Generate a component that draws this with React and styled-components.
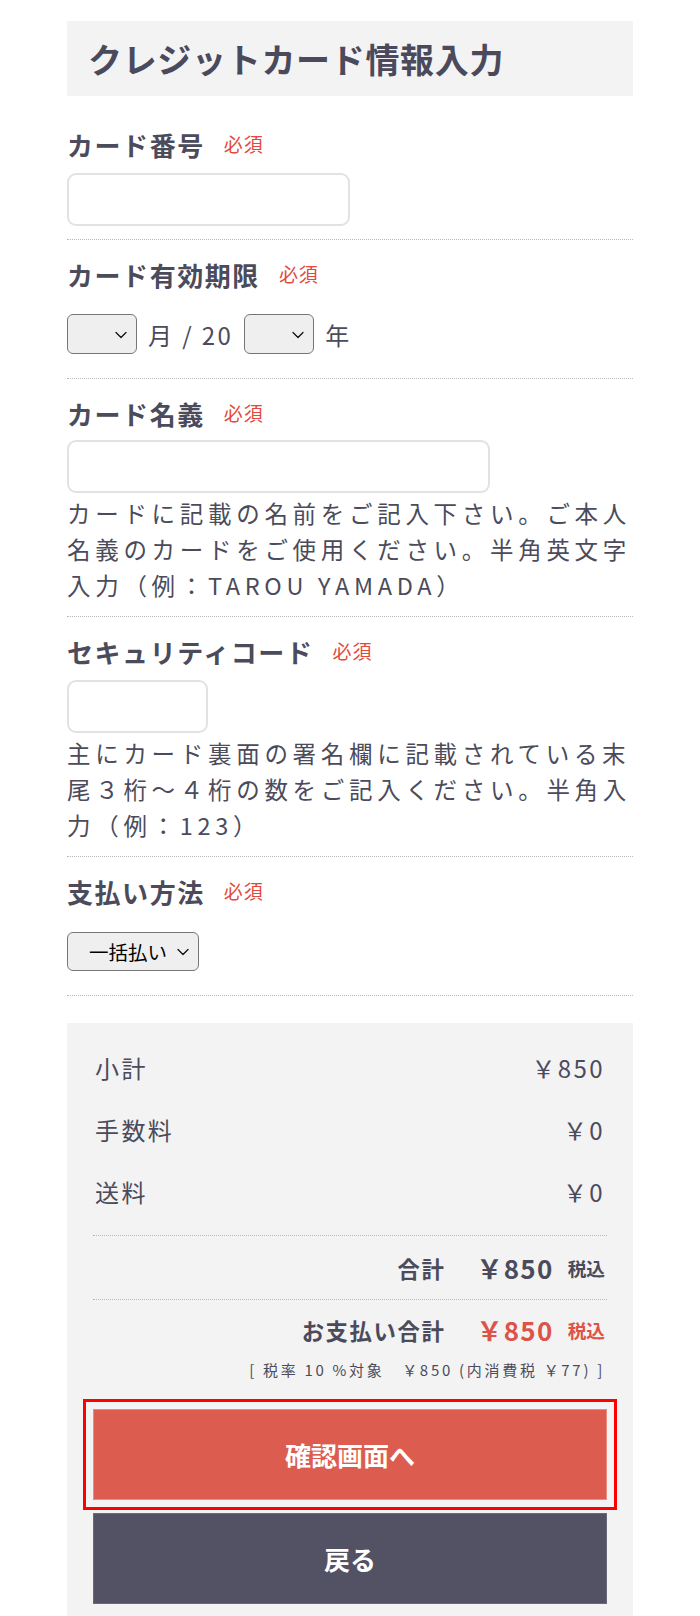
import React from "react";
import styled, { createGlobalStyle } from "styled-components";
import { ChevronDown } from "lucide-react";

const GlobalStyle = createGlobalStyle`
  html, body {
    margin: 0;
    padding: 0;
    background: #fff;
  }
  body {
    font-family: "Noto Sans CJK JP", "Noto Sans", sans-serif;
    color: #4b4b5b;
  }
  * {
    box-sizing: border-box;
  }
`;

const Page = styled.div`
  width: 566px;
  margin: 0 auto;
  padding-top: 21px;
`;

const Heading = styled.h1`
  margin: 0 0 14px;
  height: 75px;
  display: flex;
  align-items: center;
  padding-left: 21px;
  background: #f3f3f3;
  font-size: 34px;
  font-weight: 700;
  letter-spacing: 0.02em;
  color: #4a4a5c;
`;

const Field = styled.section`
  padding: 15px 0 13px;
  border-bottom: 1px dotted #b8b8b8;
`;

const Label = styled.div`
  display: flex;
  align-items: center;
  height: 39px;
  margin-bottom: ${({ $gap }) => $gap ?? 8}px;
  font-size: 26px;
  font-weight: 700;
  letter-spacing: 0.06em;
  line-height: 1.5;
`;

const Required = styled.span`
  margin-left: 19px;
  font-size: 19px;
  font-weight: 400;
  letter-spacing: 0.05em;
  color: #e2493c;
`;

const TextInput = styled.input`
  display: block;
  width: ${({ $width }) => $width}px;
  height: 53px;
  border: 2px solid #e2e2e4;
  border-radius: 9px;
  background: #fff;
  outline: none;
`;

const Note = styled.p`
  margin: 2px 0 0;
  font-size: 23.5px;
  line-height: 36px;
  letter-spacing: 0.2em;
`;

const ControlRow = styled.div`
  display: flex;
  align-items: center;
  gap: 11px;
  height: 62px;
  font-size: 24px;
  letter-spacing: 0.1em;
`;

const SelectWrap = styled.span`
  position: relative;
  display: inline-flex;
`;

const Select = styled.select`
  appearance: none;
  height: ${({ $compact }) => ($compact ? 39 : 40)}px;
  width: ${({ $width }) => ($width ? `${$width}px` : "auto")};
  padding: 0 30px 0 ${({ $compact }) => ($compact ? 21 : 10)}px;
  border: 1.5px solid #767676;
  border-radius: 6px;
  background: #efefef;
  font-family: "Noto Sans CJK JP", sans-serif;
  font-size: 19.5px;
  color: #000;
  outline: none;
`;

const Chevron = styled(ChevronDown)`
  position: absolute;
  right: 6px;
  top: 50%;
  transform: translateY(-45%);
  pointer-events: none;
  color: #111;
`;

const Summary = styled.section`
  margin-top: 27px;
  padding: 13px 26px 30px;
  background: #f3f3f3;
`;

const Lines = styled.div`
  padding-bottom: 13px;
`;

const Line = styled.div`
  display: flex;
  justify-content: space-between;
  align-items: center;
  height: 62px;
  padding: 0 2px;
  font-size: 24px;
  letter-spacing: 0.1em;
`;

const TotalRow = styled.div`
  display: flex;
  justify-content: flex-end;
  align-items: center;
  height: ${({ $height }) => $height}px;
  padding: 0 2px;
  border-top: 1px dotted #b8b8b8;
  color: #4b4b5b;
`;

const TotalLabel = styled.span`
  font-size: 22.4px;
  font-weight: 700;
  letter-spacing: 0.07em;
`;

const TotalPrice = styled.span`
  margin-left: 31px;
  font-size: 26px;
  font-weight: 700;
  letter-spacing: 0.05em;
  color: ${({ $accent }) => ($accent ? "#dd5347" : "inherit")};
`;

const TaxIn = styled.span`
  margin-left: 14px;
  font-size: 18.7px;
  font-weight: 700;
  color: ${({ $accent }) => ($accent ? "#dd5347" : "inherit")};
`;

const TaxNote = styled.div`
  height: 22px;
  padding: 0 2px;
  text-align: right;
  font-size: 15px;
  line-height: 22px;
  letter-spacing: 0.18em;
`;

const Buttons = styled.div`
  display: flex;
  flex-direction: column;
  gap: 13px;
  margin-top: 28px;
`;

const Button = styled.button`
  height: 91px;
  width: 100%;
  border: 1px solid ${({ $primary }) => ($primary ? "#e98c83" : "#6a6a7a")};
  background: ${({ $primary }) => ($primary ? "#dc5c50" : "#525264")};
  color: #fff;
  font-family: "Noto Sans CJK JP", sans-serif;
  font-size: 26px;
  font-weight: 700;
  cursor: pointer;
  outline: ${({ $highlight }) => ($highlight ? "3px solid #ff0000" : "none")};
  outline-offset: 7px;
`;

const lines = [
  ["小計", "￥850"],
  ["手数料", "￥0"],
  ["送料", "￥0"],
];

export default function App() {
  return (
    <>
      <GlobalStyle />
      <Page>
        <Heading>クレジットカード情報入力</Heading>

        <Field>
          <Label $gap={9}>
            カード番号<Required>必須</Required>
          </Label>
          <TextInput $width={283} />
        </Field>

        <Field>
          <Label $gap={9}>
            カード有効期限<Required>必須</Required>
          </Label>
          <ControlRow>
            <SelectWrap>
              <Select $width={70}>
                <option></option>
              </Select>
              <Chevron size={20} strokeWidth={1.5} />
            </SelectWrap>
            <span>月 / 20</span>
            <SelectWrap>
              <Select $width={70}>
                <option></option>
              </Select>
              <Chevron size={20} strokeWidth={1.5} />
            </SelectWrap>
            <span>年</span>
          </ControlRow>
        </Field>

        <Field>
          <Label $gap={7}>
            カード名義<Required>必須</Required>
          </Label>
          <TextInput $width={423} />
          <Note>
            カードに記載の名前をご記入下さい。ご本人名義のカードをご使用ください。半角英文字入力（例：TAROU YAMADA）
          </Note>
        </Field>

        <Field>
          <Label $gap={9}>
            セキュリティコード<Required>必須</Required>
          </Label>
          <TextInput $width={141} />
          <Note>
            主にカード裏面の署名欄に記載されている末尾３桁〜４桁の数をご記入ください。半角入力（例：123）
          </Note>
        </Field>

        <Field>
          <Label $gap={9}>
            支払い方法<Required>必須</Required>
          </Label>
          <ControlRow>
            <SelectWrap>
              <Select $compact defaultValue="1">
                <option value="1">一括払い</option>
              </Select>
              <Chevron size={20} strokeWidth={1.5} />
            </SelectWrap>
          </ControlRow>
        </Field>

        <Summary>
          <Lines>
            {lines.map(([label, value]) => (
              <Line key={label}>
                <span>{label}</span>
                <span>{value}</span>
              </Line>
            ))}
          </Lines>
          <TotalRow $height={64}>
            <TotalLabel>合計</TotalLabel>
            <TotalPrice>￥850</TotalPrice>
            <TaxIn>税込</TaxIn>
          </TotalRow>
          <TotalRow $height={60}>
            <TotalLabel>お支払い合計</TotalLabel>
            <TotalPrice $accent>￥850</TotalPrice>
            <TaxIn $accent>税込</TaxIn>
          </TotalRow>
          <TaxNote>[ 税率 10 %対象　￥850 (内消費税 ￥77) ]</TaxNote>
          <Buttons>
            <Button $primary $highlight>
              確認画面へ
            </Button>
            <Button>戻る</Button>
          </Buttons>
        </Summary>
      </Page>
    </>
  );
}
